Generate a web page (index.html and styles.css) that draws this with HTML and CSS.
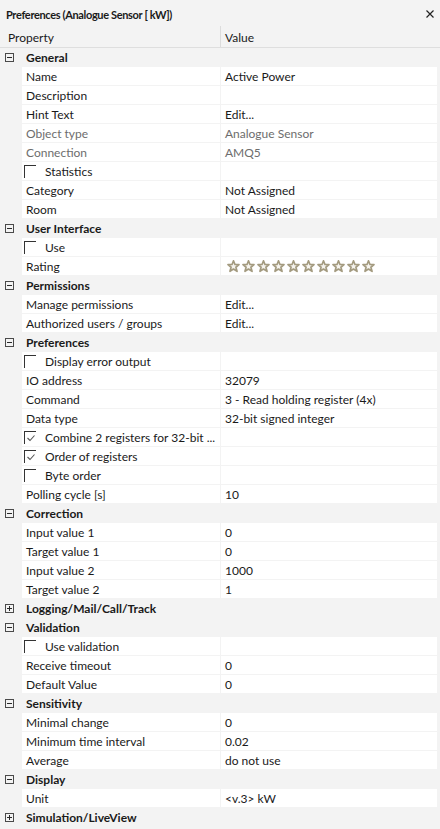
FILE: index.html
```html
<!DOCTYPE html>
<html>
<head>
<meta charset="utf-8">
<link rel="stylesheet" href="styles.css">
</head>
<body>
<svg class="defs" width="0" height="0">
  <defs>
    <symbol id="star" viewBox="0 0 14 14">
      <path d="M7 0.8 L8.6 4.8 L12.9 5 L9.6 7.8 L10.8 12.2 L7 9.7 L3.2 12.2 L4.4 7.8 L1.1 5 L5.4 4.8 Z" fill="#f6f4ee" stroke="#a39a7f" stroke-width="1.8" stroke-linejoin="round"/>
    </symbol>
    <symbol id="minus" viewBox="0 0 9 9">
      <rect x="0.5" y="0.5" width="8" height="8" fill="none" stroke="#4a4a4a"/>
      <path d="M2 4.5 H7" stroke="#2a2a2a"/>
    </symbol>
    <symbol id="plus" viewBox="0 0 9 9">
      <rect x="0.5" y="0.5" width="8" height="8" fill="none" stroke="#4a4a4a"/>
      <path d="M2 4.5 H7 M4.5 2 V7" stroke="#2a2a2a"/>
    </symbol>
    <symbol id="tick" viewBox="0 0 10 10">
      <path d="M1.5 5 L4 7.5 L8.5 2.5" fill="none" stroke="#555" stroke-width="1.1"/>
    </symbol>
  </defs>
</svg>
<div class="panel">
  <div class="title">
    <span class="title-text">Preferences (Analogue Sensor [ kW])</span>
    <svg class="close" width="8" height="8" viewBox="0 0 8 8"><path d="M0.5 0.5 L7.5 7.5 M7.5 0.5 L0.5 7.5" stroke="#222" stroke-width="1.2"/></svg>
  </div>
  <div class="header">
    <div class="h-prop">Property</div>
    <div class="h-val">Value</div>
  </div>

  <div class="row cat"><svg class="exp"><use href="#minus"/></svg><span>General</span></div>
  <div class="row"><div class="g"></div><div class="p">Name</div><div class="v">Active Power</div></div>
  <div class="row"><div class="g"></div><div class="p">Description</div><div class="v"></div></div>
  <div class="row"><div class="g"></div><div class="p">Hint Text</div><div class="v">Edit...</div></div>
  <div class="row dis"><div class="g"></div><div class="p">Object type</div><div class="v">Analogue Sensor</div></div>
  <div class="row dis"><div class="g"></div><div class="p">Connection</div><div class="v">AMQ5</div></div>
  <div class="row"><div class="g"></div><div class="p chk"><span class="box"></span>Statistics</div><div class="v"></div></div>
  <div class="row"><div class="g"></div><div class="p">Category</div><div class="v">Not Assigned</div></div>
  <div class="row"><div class="g"></div><div class="p">Room</div><div class="v">Not Assigned</div></div>

  <div class="row cat"><svg class="exp"><use href="#minus"/></svg><span>User Interface</span></div>
  <div class="row"><div class="g"></div><div class="p chk"><span class="box"></span>Use</div><div class="v"></div></div>
  <div class="row"><div class="g"></div><div class="p">Rating</div><div class="v stars">
    <svg class="st"><use href="#star"/></svg><svg class="st"><use href="#star"/></svg><svg class="st"><use href="#star"/></svg><svg class="st"><use href="#star"/></svg><svg class="st"><use href="#star"/></svg><svg class="st"><use href="#star"/></svg><svg class="st"><use href="#star"/></svg><svg class="st"><use href="#star"/></svg><svg class="st"><use href="#star"/></svg><svg class="st"><use href="#star"/></svg>
  </div></div>

  <div class="row cat"><svg class="exp"><use href="#minus"/></svg><span>Permissions</span></div>
  <div class="row"><div class="g"></div><div class="p">Manage permissions</div><div class="v">Edit...</div></div>
  <div class="row"><div class="g"></div><div class="p">Authorized users / groups</div><div class="v">Edit...</div></div>

  <div class="row cat"><svg class="exp"><use href="#minus"/></svg><span>Preferences</span></div>
  <div class="row"><div class="g"></div><div class="p chk"><span class="box"></span>Display error output</div><div class="v"></div></div>
  <div class="row"><div class="g"></div><div class="p">IO address</div><div class="v">32079</div></div>
  <div class="row"><div class="g"></div><div class="p">Command</div><div class="v">3 - Read holding register (4x)</div></div>
  <div class="row"><div class="g"></div><div class="p">Data type</div><div class="v">32-bit signed integer</div></div>
  <div class="row"><div class="g"></div><div class="p chk"><span class="box"><svg class="tick"><use href="#tick"/></svg></span>Combine 2 registers for 32-bit ...</div><div class="v"></div></div>
  <div class="row"><div class="g"></div><div class="p chk"><span class="box"><svg class="tick"><use href="#tick"/></svg></span>Order of registers</div><div class="v"></div></div>
  <div class="row"><div class="g"></div><div class="p chk"><span class="box"></span>Byte order</div><div class="v"></div></div>
  <div class="row"><div class="g"></div><div class="p">Polling cycle [s]</div><div class="v">10</div></div>

  <div class="row cat"><svg class="exp"><use href="#minus"/></svg><span>Correction</span></div>
  <div class="row"><div class="g"></div><div class="p">Input value 1</div><div class="v">0</div></div>
  <div class="row"><div class="g"></div><div class="p">Target value 1</div><div class="v">0</div></div>
  <div class="row"><div class="g"></div><div class="p">Input value 2</div><div class="v">1000</div></div>
  <div class="row"><div class="g"></div><div class="p">Target value 2</div><div class="v">1</div></div>

  <div class="row cat"><svg class="exp"><use href="#plus"/></svg><span>Logging/Mail/Call/Track</span></div>

  <div class="row cat"><svg class="exp"><use href="#minus"/></svg><span>Validation</span></div>
  <div class="row"><div class="g"></div><div class="p chk"><span class="box"></span>Use validation</div><div class="v"></div></div>
  <div class="row"><div class="g"></div><div class="p">Receive timeout</div><div class="v">0</div></div>
  <div class="row"><div class="g"></div><div class="p">Default Value</div><div class="v">0</div></div>

  <div class="row cat"><svg class="exp"><use href="#minus"/></svg><span>Sensitivity</span></div>
  <div class="row"><div class="g"></div><div class="p">Minimal change</div><div class="v">0</div></div>
  <div class="row"><div class="g"></div><div class="p">Minimum time interval</div><div class="v">0.02</div></div>
  <div class="row"><div class="g"></div><div class="p">Average</div><div class="v">do not use</div></div>

  <div class="row cat"><svg class="exp"><use href="#minus"/></svg><span>Display</span></div>
  <div class="row"><div class="g"></div><div class="p">Unit</div><div class="v">&lt;v.3&gt; kW</div></div>

  <div class="row cat"><svg class="exp"><use href="#plus"/></svg><span>Simulation/LiveView</span></div>
</div>
</body>
</html>
```
FILE: styles.css
```css
html, body {
  margin: 0;
  padding: 0;
  background: #f3f3f3;
}
body {
  font-family: Lato, "Noto Sans", sans-serif;
  font-size: 12px;
  color: #1a1a1a;
}
.defs {
  position: absolute;
  width: 0;
  height: 0;
}
.panel {
  width: 440px;
}
.title {
  height: 26px;
  display: flex;
  align-items: center;
  justify-content: space-between;
  padding: 0 6px;
  font-weight: bold;
  color: #1a1a1a;
}
.title-text {
  font-size: 11px;
  letter-spacing: -0.35px;
  padding-top: 2px;
}
.close {
  margin-top: 1px;
}
.header {
  display: flex;
  height: 21px;
  border-bottom: 1px solid #dedede;
  box-sizing: content-box;
}
.h-prop {
  width: 220px;
  padding: 2px 0 0 8px;
  box-sizing: border-box;
  line-height: 19px;
}
.h-val {
  flex: 1;
  border-left: 1px solid #dcdcdc;
  padding: 2px 0 0 4px;
  line-height: 19px;
}
.row {
  display: flex;
  height: 18px;
  margin-bottom: 1px;
  line-height: 16px;
}
.cat {
  align-items: center;
  font-weight: bold;
}
.cat span {
  padding-left: 12px;
  padding-top: 2px;
}
.exp {
  width: 9px;
  height: 9px;
  margin-left: 5px;
  flex: none;
}
.g {
  width: 22px;
  flex: none;
}
.p {
  width: 198px;
  background: #fff;
  padding: 2px 0 0 4px;
  box-sizing: border-box;
  white-space: nowrap;
  display: flex;
  align-items: center;
}
.v {
  width: 216px;
  margin-left: 1px;
  background: #fff;
  padding: 2px 0 0 4px;
  box-sizing: border-box;
  white-space: nowrap;
  display: flex;
  align-items: center;
}
.dis .p, .dis .v {
  color: #6d6d6d;
}
.p.chk {
  padding-left: 2px;
}
.box {
  width: 12px;
  height: 13px;
  box-sizing: border-box;
  border-left: 1px solid #333;
  border-top: 1px solid #333;
  margin: -2px 9px 0 0;
  flex: none;
  display: flex;
  align-items: center;
  justify-content: center;
}
.tick {
  width: 10px;
  height: 10px;
}
.v.stars {
  padding: 0 0 0 6px;
  gap: 2px;
}
.st {
  width: 13px;
  height: 13px;
  flex: none;
}
```
